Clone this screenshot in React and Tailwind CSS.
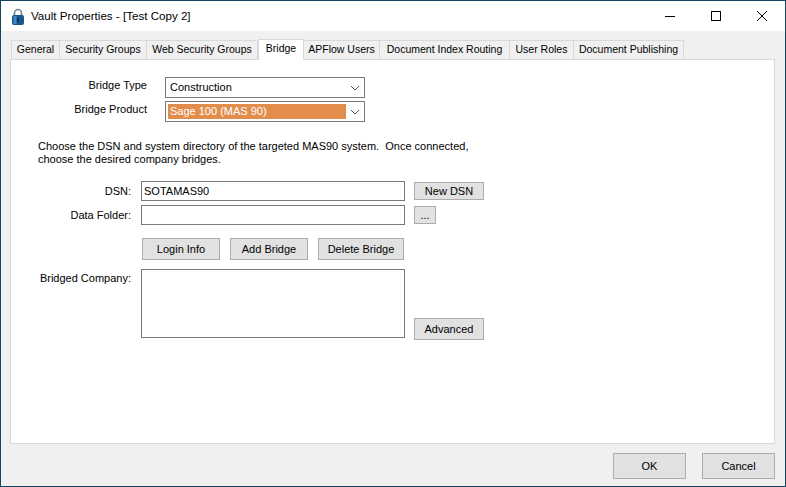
const font = { fontFamily: '"Liberation Sans", Arial, sans-serif' };

const tabs = [
  { label: "General", w: "w-[49px]" },
  { label: "Security Groups", w: "w-[87px]" },
  { label: "Web Security Groups", w: "w-[111px]" },
  { label: "Bridge", w: "w-[46px]", active: true },
  { label: "APFlow Users", w: "w-[76px]" },
  { label: "Document Index Routing", w: "w-[130px]" },
  { label: "User Roles", w: "w-[64px]" },
  { label: "Document Publishing", w: "w-[110px]" },
];

function Btn({ className, children }) {
  return (
    <div className={"flex items-center justify-center shrink-0 border border-[#adadad] bg-[#e1e1e1] text-[11px] text-black " + className}>
      {children}
    </div>
  );
}

function Chevron() {
  return (
    <svg width="10" height="6" viewBox="0 0 10 6" className="shrink-0">
      <path d="M1 1l4 4 4-4" fill="none" stroke="#555" strokeWidth="1" />
    </svg>
  );
}

function Combo({ children, selected }) {
  return (
    <div className="flex h-[21px] w-[200px] items-center border border-[#7a7a7a] bg-white pl-[2px] pr-[4px]">
      <div className={"flex h-[15px] w-[178px] items-center pl-[2px] text-[11px] " + (selected ? "bg-[#e28d4c] text-white" : "text-black")}>
        {children}
      </div>
      <div className="ml-auto flex"><Chevron /></div>
    </div>
  );
}

function FieldLabel({ children, className = "" }) {
  return <div className={"w-[120px] shrink-0 text-right text-[11px] leading-[14px] " + className}>{children}</div>;
}

export default function App() {
  return (
    <div style={font} className="relative flex h-[487px] w-[786px] flex-col overflow-hidden border border-[#14465f] bg-[#f0f0f0] text-black">
      {/* Desktop colours bleeding through the window edge */}
      <div className="absolute -left-px top-[142px] h-[24px] w-px bg-[#7f8a90]" />
      <div className="absolute -left-px top-[194px] h-[24px] w-px bg-[#a0623a]" />

      {/* Title bar */}
      <div className="flex h-[30px] shrink-0 items-center bg-white pl-[10px]">
        <svg width="14" height="17" viewBox="0 0 14 17" className="shrink-0">
          <path d="M3.5 8V5a3.5 3.5 0 0 1 7 0v3" fill="none" stroke="#6f8296" strokeWidth="1.6" />
          <rect x="1" y="7" width="12" height="10" rx="2" fill="#17568f" />
          <rect x="2.5" y="8" width="3" height="8" fill="#3f88c4" />
          <rect x="6" y="10" width="2" height="4" fill="#0b3157" />
        </svg>
        <span className="ml-[6px] text-[11.6px]">Vault Properties - [Test Copy 2]</span>
        <div className="ml-auto flex h-full items-center">
          <div className="flex h-full w-[46px] items-center justify-center">
            <div className="h-px w-[10px] bg-black" />
          </div>
          <div className="flex h-full w-[46px] items-center justify-center">
            <div className="h-[10px] w-[10px] border border-black" />
          </div>
          <div className="flex h-full w-[46px] items-center justify-center">
            <svg width="10" height="10" viewBox="0 0 10 10"><path d="M0 0l10 10M10 0L0 10" stroke="#000" strokeWidth="1" /></svg>
          </div>
        </div>
      </div>

      {/* Tab strip */}
      <div className="flex h-[28px] shrink-0 items-end pl-[10px]">
        {tabs.map((t) => (
          <div
            key={t.label}
            className={
              "flex shrink-0 items-center justify-center whitespace-nowrap border-[#d9d9d9] text-[10.5px] " +
              t.w +
              (t.active
                ? " relative z-10 -mb-px h-[21px] border border-b-0 bg-white pb-[3px]"
                : " h-[19px] border-t border-r first:border-l bg-[#f0f0f0]")
            }
          >
            {t.label}
          </div>
        ))}
      </div>

      {/* Tab page */}
      <div className="ml-[9px] mr-[10px] flex h-[385px] shrink-0 flex-col border border-[#d9d9d9] bg-white">
        <div className="mt-[17px] flex items-start">
          <div className="w-[136px] shrink-0 text-right text-[11px] leading-[16px]">Bridge Type</div>
          <div className="ml-[18px]"><Combo>Construction</Combo></div>
        </div>
        <div className="mt-[3px] flex items-start">
          <div className="w-[136px] shrink-0 pt-px text-right text-[11px] leading-[14px]">Bridge Product</div>
          <div className="ml-[18px]"><Combo selected>Sage 100 (MAS 90)</Combo></div>
        </div>

        <p className="ml-[27px] mt-[18px] text-[11px] leading-[13px] whitespace-pre">
          {"Choose the DSN and system directory of the targeted MAS90 system.  Once connected,\nchoose the desired company bridges."}
        </p>

        <div className="mt-[15px] flex items-center">
          <FieldLabel>DSN:</FieldLabel>
          <div className="ml-[10px] flex h-[20px] w-[264px] items-center border border-[#7a7a7a] pl-[2px] text-[11px]">SOTAMAS90</div>
          <Btn className="ml-[9px] h-[18px] w-[70px]">New DSN</Btn>
        </div>
        <div className="mt-[4px] flex items-center">
          <FieldLabel>Data Folder:</FieldLabel>
          <div className="ml-[10px] h-[20px] w-[264px] border border-[#7a7a7a]" />
          <Btn className="ml-[9px] h-[18px] w-[22px]">...</Btn>
        </div>

        <div className="ml-[131px] mt-[13px] flex gap-[10px]">
          <Btn className="h-[22px] w-[78px]">Login Info</Btn>
          <Btn className="h-[22px] w-[78px]">Add Bridge</Btn>
          <Btn className="h-[22px] w-[86px]">Delete Bridge</Btn>
        </div>

        <div className="mt-[9px] flex items-start">
          <FieldLabel className="pt-[2px]">Bridged Company:</FieldLabel>
          <div className="ml-[10px] h-[69px] w-[264px] border border-[#7a7a7a]" />
          <Btn className="ml-[9px] mt-[49px] h-[22px] w-[70px]">Advanced</Btn>
        </div>
      </div>

      {/* Dialog buttons */}
      <div className="flex flex-1 items-start justify-end gap-[16px] pr-[10px] pt-[9px]">
        <Btn className="h-[26px] w-[73px]">OK</Btn>
        <Btn className="h-[26px] w-[73px]">Cancel</Btn>
      </div>
    </div>
  );
}
